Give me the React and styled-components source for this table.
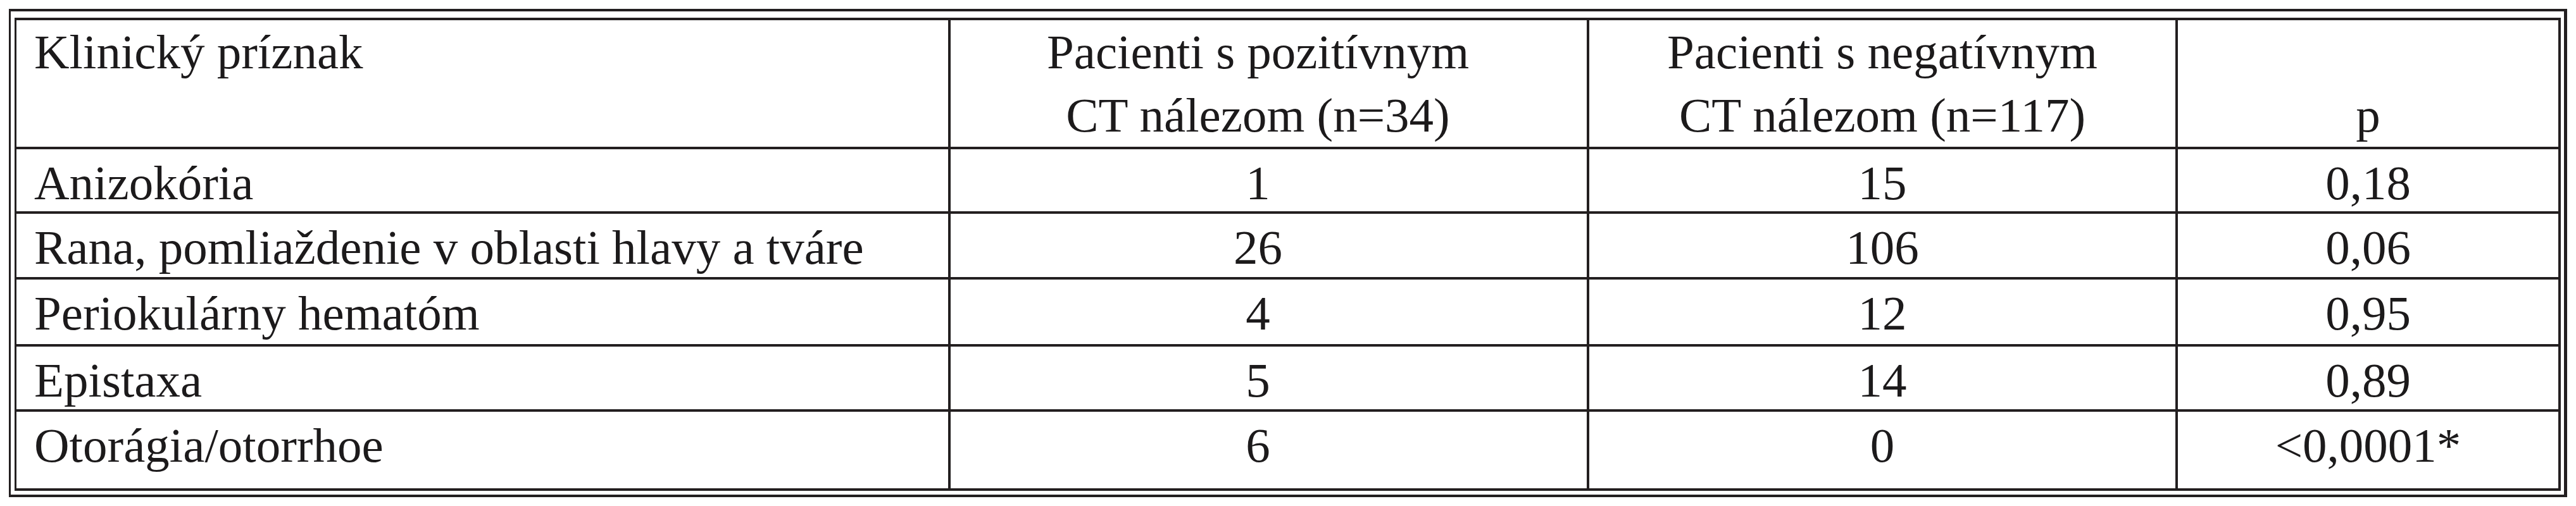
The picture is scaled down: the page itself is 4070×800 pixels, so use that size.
import React from "react";
import styled, { createGlobalStyle } from "styled-components";

const Global = createGlobalStyle`
  html, body { margin: 0; padding: 0; background: #ffffff; }
  body {
    font-family: "Liberation Serif", "Times New Roman", serif;
    color: #1c1a1b;
  }
`;

const Page = styled.div`
  padding: 14px 0 0 14px;
`;

const Frame = styled.div`
  box-sizing: border-box;
  width: 4042px;
  border-style: solid;
  border-color: #231f20;
  border-width: 4px 5px 4px 3px;
  padding: 10px 5px 6px 6px;
`;

const Grid = styled.div`
  display: grid;
  grid-template-columns: 1472px 1005px 926px 601px;
  grid-template-rows: 200px 98px 100px 102px 99px 121px;
  gap: 4px;
  padding: 4px 4px 4px 3px;
  background: #231f20;
`;

const Cell = styled.div`
  box-sizing: border-box;
  background: #ffffff;
  font-size: 77px;
  line-height: 100px;
  white-space: nowrap;
  overflow: hidden;
  display: flex;
  flex-direction: column;
  justify-content: ${(p) => (p.$valign === "bottom" ? "flex-end" : "flex-start")};
  text-align: ${(p) => p.$align || "left"};
  padding: ${(p) => (p.$head ? 0 : 3)}px ${(p) => p.$padRight ?? 28}px 0 28px;
`;

const Line = styled.span`
  display: block;
`;

const columns = [
  { align: "left", padRight: 28 },
  { align: "center", padRight: 62 },
  { align: "center", padRight: 28 },
  { align: "center", padRight: 28 },
];

const rows = [
  ["Anizokória", "1", "15", "0,18"],
  ["Rana, pomliaždenie v oblasti hlavy a tváre", "26", "106", "0,06"],
  ["Periokulárny hematóm", "4", "12", "0,95"],
  ["Epistaxa", "5", "14", "0,89"],
  ["Otorágia/otorrhoe", "6", "0", "<0,0001*"],
];

export default function App() {
  return (
    <>
      <Global />
      <Page>
        <Frame>
          <Grid role="table">
            <Cell $head $align="left" $padRight={28}>
              <Line>Klinický príznak</Line>
            </Cell>
            <Cell $head $align="center" $padRight={62}>
              <Line>Pacienti s pozitívnym</Line>
              <Line>CT nálezom (n=34)</Line>
            </Cell>
            <Cell $head $align="center">
              <Line>Pacienti s negatívnym</Line>
              <Line>CT nálezom (n=117)</Line>
            </Cell>
            <Cell $head $align="center" $valign="bottom">
              <Line>p</Line>
            </Cell>
            {rows.map((r, i) =>
              r.map((v, j) => (
                <Cell
                  key={`${i}-${j}`}
                  $align={columns[j].align}
                  $padRight={columns[j].padRight}
                >
                  <Line>{v}</Line>
                </Cell>
              ))
            )}
          </Grid>
        </Frame>
      </Page>
    </>
  );
}
